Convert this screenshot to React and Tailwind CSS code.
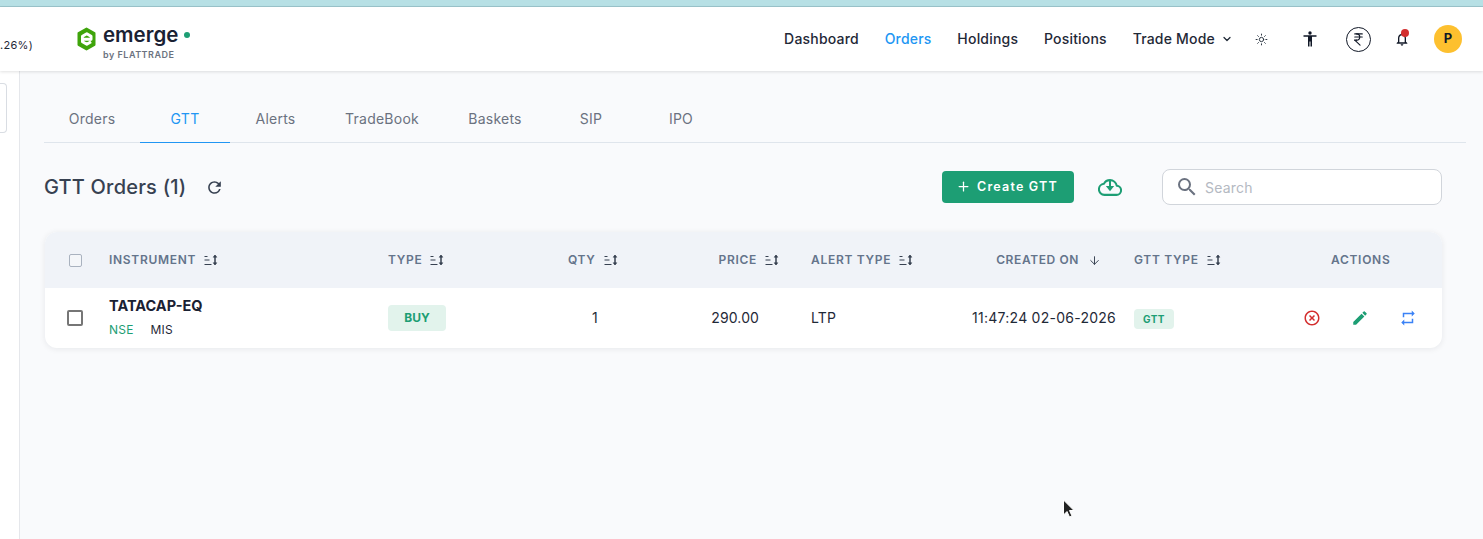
import { ChevronDown, IndianRupee, Sun, ArrowDown, Plus } from 'lucide-react';
import { MdEdit, MdHighlightOff, MdOutlineNotifications, MdRefresh, MdRepeat, MdSearch } from 'react-icons/md';

const tableCols = 'grid-cols-[64px_279px_180px_71px_172px_111px_212px_197px_110px]';

function SortIcon() {
  return (
    <svg width="14" height="12" viewBox="0 0 14 12" fill="none" stroke="#374151" strokeWidth="1" className="flex-shrink-0">
      <path d="M0.500 2.500h3M0.500 6h5M0.500 10.500h7" />
      <path d="M11 1.500v9" strokeWidth="1.500" />
      <path d="M9.200 3.200 11 1l1.800 2.200zM9.200 8.800 11 11l1.800-2.200z" fill="#374151" strokeWidth="0.600" />
    </svg>
  );
}

function Logo() {
  return (
    <svg width="19" height="24" viewBox="0 0 19 24">
      <path d="M9.500 1.500 17.500 6.200v11.600L9.500 22.500 1.500 17.800V6.200z" fill="#3fa40b" stroke="#3fa40b" strokeWidth="2" strokeLinejoin="round" />
      <path d="M6.500 12.300h7.500V9.300L9.800 6.800 5.500 9.300v5.400l4.300 2.500 4.200-2.500" fill="none" stroke="#fff" strokeWidth="3" strokeLinejoin="round" />
    </svg>
  );
}

function Accessibility() {
  return (
    <svg width="14" height="16" viewBox="0 0 14 16" fill="#111827">
      <circle cx="7" cy="2" r="1.700" />
      <path d="M0.500 4.300h13v1.500H9v9.700H7.500V10.500h-1v5H5V5.800H0.500z" />
    </svg>
  );
}

function CloudDownload() {
  return (
    <svg width="24" height="19" viewBox="-1 2.500 26 19" fill="none" stroke="#1d9e74" strokeWidth="2.200" strokeLinejoin="round" className="ml-[24px]">
      <path d="M19.350 10.040A7.490 7.490 0 0 0 12 4C9.110 4 6.540 5.640 5.350 8.040A5.994 5.994 0 0 0 0 14c0 3.310 2.690 6 6 6h13c2.760 0 5-2.240 5-5 0-2.640-2.050-4.780-4.650-4.960z" />
      <path d="M12 4v8" />
      <path d="M7.500 10.500h9L12 16z" fill="#1d9e74" stroke="none" />
    </svg>
  );
}

function HeaderCell({ label, className = '' }) {
  return (
    <div className={`flex items-center gap-2 text-xs font-semibold tracking-[0.7px] text-[#64748b] ${className}`}>
      <span>{label}</span>
      <SortIcon />
    </div>
  );
}

export default function App() {
  const navLinks = ['Dashboard', 'Orders', 'Holdings', 'Positions'];
  const tabs = [
    ['Orders', 'w-[96px]'],
    ['GTT', 'w-[90px]'],
    ['Alerts', 'w-[91px]'],
    ['TradeBook', 'w-[122px]'],
    ['Baskets', 'w-[104px]'],
    ['SIP', 'w-[88px]'],
    ['IPO', 'w-[92px]'],
  ];

  return (
    <div className="relative flex h-[539px] w-[1483px] flex-col overflow-hidden bg-white font-['Inter',sans-serif]">
      <div className="h-[7px] flex-shrink-0 border-b border-[#9cc5cc] bg-[#b7e0e5]" />

      {/* Header */}
      <header className="z-10 flex h-[64px] flex-shrink-0 items-center bg-white pr-[21px] shadow-[0_1px_3px_rgba(0,0,0,0.12)]">
        <div className="mt-[12px] w-[32px] text-[11px] tracking-[0.3px] whitespace-nowrap text-[#1f2937]">.26%)</div>
        <div className="ml-[45px] flex items-center gap-[7px]">
          <Logo />
          <div className="mt-[6px] flex flex-col">
            <div className="flex items-center gap-[6px]">
              <span className="text-[20.500px] leading-[24px] font-semibold text-[#1a2133]">emerge</span>
              <span className="h-[6px] w-[6px] rounded-full bg-[#1d9e74]" />
            </div>
            <span className="mt-[2px] text-[9px] leading-[12px] font-semibold tracking-[0.5px] text-[#6b7280]">by FLATTRADE</span>
          </div>
        </div>

        <nav className="ml-auto flex items-center gap-[25.750px] text-sm font-medium tracking-[0.2px] text-[#1f2937]">
          {navLinks.map((link) => (
            <span key={link} className={link === 'Orders' ? 'text-[#2196f3]' : ''}>{link}</span>
          ))}
          <span className="flex items-center gap-[6px]">
            Trade Mode <ChevronDown size={12} strokeWidth={2.500} />
          </span>
        </nav>
        <div className="ml-[22px] flex items-center">
          <Sun size={13} strokeWidth={1.700} className="text-[#1f2937]" />
          <span className="ml-[35px]"><Accessibility /></span>
          <span className="ml-[29px] flex h-[25px] w-[25px] items-center justify-center rounded-full border border-[#111827]">
            <IndianRupee size={15} strokeWidth={1.800} className="text-[#111827]" />
          </span>
          <span className="relative ml-[23px]">
            <MdOutlineNotifications size={16} className="text-[#111827]" />
            <span className="absolute -top-[2px] left-[7px] h-[8px] w-[8px] rounded-full bg-[#d32f2f]" />
          </span>
          <span className="ml-[24px] flex h-[28px] w-[28px] items-center justify-center rounded-full bg-[#fdc02f] text-[13px] font-bold text-[#111827]">
            P
          </span>
        </div>
      </header>

      <div className="flex flex-1">
        {/* Left rail */}
        <aside className="w-[20px] flex-shrink-0 border-r border-[#e5e7eb] bg-white pt-[12px]">
          <div className="h-[50px] w-[7px] rounded-r-[4px] border border-l-0 border-[#d9dde3]" />
        </aside>

        <main className="flex-1 bg-[#f9fafc] pr-[17px] pl-[24px]">
          {/* Tabs */}
          <div className="mt-[24px] flex h-[48px] border-b border-[#dfe5ec] text-sm tracking-[0.25px] text-[#6b7280]">
            {tabs.map(([tab, width]) => (
              <div
                key={tab}
                className={`flex h-[48px] items-center justify-center ${width} ${tab === 'GTT' ? 'border-b border-[#2196f3] text-[#2196f3]' : ''}`}
              >
                {tab}
              </div>
            ))}
          </div>

          {/* Title row */}
          <div className="mt-[25px] mr-[24px] flex h-[38px] items-center">
            <h1 className="text-[20px] font-medium tracking-[0.2px] text-[#374151]">GTT Orders (1)</h1>
            <MdRefresh size={19} className="ml-[19px] text-[#374151]" />
            <button className="mt-[-1px] ml-auto flex h-[32px] w-[132px] items-center justify-center gap-[6px] rounded-[4px] bg-[#1d9e74] pt-[2px] pr-[2px] text-[12.500px] font-semibold tracking-[1.200px] text-white">
              <Plus size={15} strokeWidth={2} className="-mt-[2px]" /> Create GTT
            </button>
            <CloudDownload />
            <div className="ml-[40px] flex h-[36px] w-[280px] items-center rounded-[8px] border border-[#d1d5db] bg-white pl-[12px]">
              <MdSearch size={24} className="text-[#6b7280]" />
              <span className="mt-[1px] ml-[6px] text-sm tracking-[0.2px] text-[#b4b9c2]">Search</span>
            </div>
          </div>

          {/* Table */}
          <div className="mt-[26px] mr-[24px] ml-[1px] overflow-hidden rounded-[12px] bg-white shadow-[0_1px_6px_rgba(15,23,42,0.08)]">
            <div className={`grid h-[56px] ${tableCols} items-center bg-[#f0f3f8]`}>
              <div className="ml-[24px] h-[13px] w-[13px] rounded-[2px] border border-[#a9b2bf] bg-[#f4f6f9]" />
              <HeaderCell label="INSTRUMENT" />
              <HeaderCell label="TYPE" />
              <HeaderCell label="QTY" />
              <HeaderCell label="PRICE" className="justify-end pr-[32px]" />
              <HeaderCell label="ALERT TYPE" />
              <div className="flex items-center justify-end gap-[9px] pr-[33px] text-xs font-semibold tracking-[0.6px] whitespace-nowrap text-[#64748b]">
                CREATED ON <ArrowDown size={13} strokeWidth={1.800} className="text-[#374151]" />
              </div>
              <HeaderCell label="GTT TYPE" />
              <div className="text-xs font-semibold tracking-[0.7px] text-[#64748b]">ACTIONS</div>
            </div>
            <div className={`grid h-[60px] ${tableCols} items-center`}>
              <div className="ml-[22px] h-[16px] w-[16px] rounded-[2px] border-2 border-[#767676]" />
              <div className="-mt-[2px]">
                <div className="text-[14.500px] leading-[20px] font-bold text-[#1a2133]">TATACAP-EQ</div>
                <div className="mt-[6px] flex gap-[17px] text-xs leading-[16px] tracking-[0.2px]">
                  <span className="text-[#1d9e74]">NSE</span>
                  <span className="text-[#1f2937]">MIS</span>
                </div>
              </div>
              <div>
                <span className="flex h-[26px] w-[58px] items-center justify-center rounded-[4px] bg-[#e2f3ec] text-xs font-bold text-[#1d9e74]">BUY</span>
              </div>
              <div className="pl-[24px] text-sm text-[#1f2937]">1</div>
              <div className="pr-[52px] text-right text-sm tracking-[0.1px] text-[#1f2937]">290.00</div>
              <div className="text-sm tracking-[0.2px] text-[#1f2937]">LTP</div>
              <div className="pr-[18px] text-right text-sm tracking-[0.25px] whitespace-nowrap text-[#1f2937]">11:47:24 02-06-2026</div>
              <div className="mt-[2px]">
                <span className="flex h-[20px] w-[40px] items-center justify-center rounded-[4px] bg-[#e2f3ec] text-[10px] font-bold tracking-[0.5px] text-[#1d9e74]">GTT</span>
              </div>
              <div className="-ml-[40px] flex items-center justify-end gap-[30px] pr-[24px]">
                <MdHighlightOff size={18} className="text-[#d32f2f]" />
                <MdEdit size={18} className="text-[#1d9e74]" />
                <MdRepeat size={18} className="text-[#3b82f6]" />
              </div>
            </div>
          </div>
        </main>
      </div>

      {/* Mouse pointer */}
      <svg width="14" height="20" viewBox="0 0 14 20" className="absolute top-[499px] left-[1062px]">
        <path d="M1.500 1v15l3.500-3.500 2.500 5.500 2.500-1-2.500-5.500h4.500z" fill="#222" stroke="#fff" strokeWidth="1" />
      </svg>
    </div>
  );
}
